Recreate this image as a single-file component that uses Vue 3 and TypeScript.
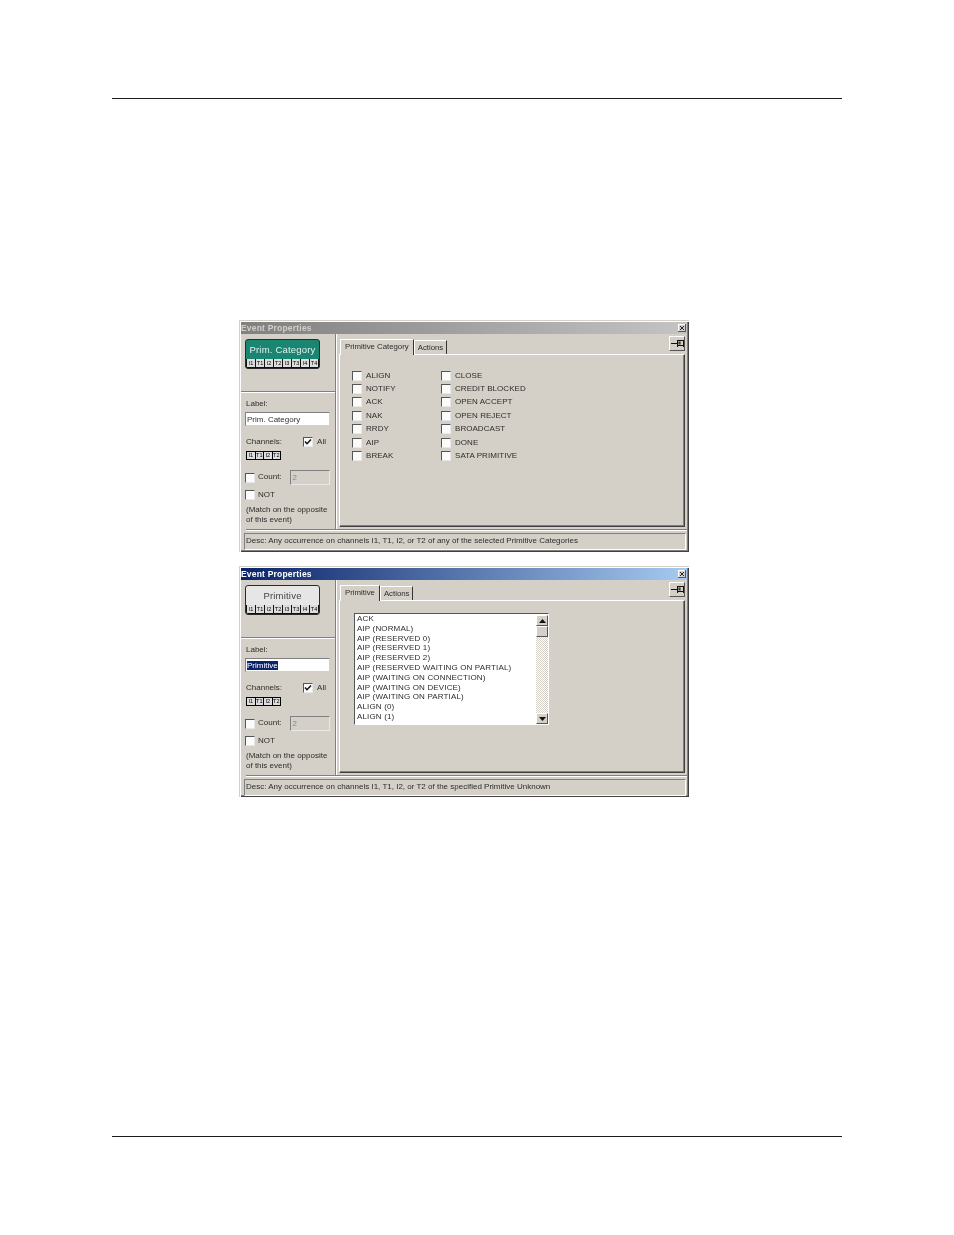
<script setup lang="ts">
interface Win {
  active: boolean
  chip: string
  tabs: string[]
  desc: string
  list: boolean
}
const wins: Win[] = [
  { active: false, chip: 'Prim. Category', tabs: ['Primitive Category', 'Actions'], list: false,
    desc: 'Desc: Any occurrence on channels I1, T1, I2, or T2 of any of the selected Primitive Categories' },
  { active: true, chip: 'Primitive', tabs: ['Primitive', 'Actions'], list: true,
    desc: 'Desc: Any occurrence on channels I1, T1, I2, or T2 of the specified Primitive Unknown' },
]
const allCh = ['I1', 'T1', 'I2', 'T2', 'I3', 'T3', 'I4', 'T4']
const ch = ['I1', 'T1', 'I2', 'T2']
const cats = ['ALIGN', 'CLOSE', 'NOTIFY', 'CREDIT BLOCKED', 'ACK', 'OPEN ACCEPT', 'NAK', 'OPEN REJECT', 'RRDY', 'BROADCAST', 'AIP', 'DONE', 'BREAK', 'SATA PRIMITIVE']
const items = ['ACK', 'AIP (NORMAL)', 'AIP (RESERVED 0)', 'AIP (RESERVED 1)', 'AIP (RESERVED 2)', 'AIP (RESERVED WAITING ON PARTIAL)', 'AIP (WAITING ON CONNECTION)', 'AIP (WAITING ON DEVICE)', 'AIP (WAITING ON PARTIAL)', 'ALIGN (0)', 'ALIGN (1)']
</script>

<template>
  <div class="page">
    <div class="rule"></div>
    <div class="windows">
      <section v-for="w in wins" :key="w.chip" class="win">
        <header class="title" :class="{ on: w.active }">
          <span>Event Properties</span>
          <span class="close"><svg width="6" height="6" viewBox="0 0 6 6"><path d="M1 1l4 4M5 1L1 5" stroke="#222" stroke-width="1" fill="none"/></svg></span>
        </header>
        <div class="body">
          <aside class="side">
            <div class="top">
              <div class="chip" :class="{ teal: !w.active }">
                <div class="chip-label">{{ w.chip }}</div>
                <div class="chip-boxes"><span v-for="c in allCh" :key="c">{{ c }}</span></div>
              </div>
            </div>
            <div class="fields">
              <div class="txt lab">Label:</div>
              <div class="input"><span :class="{ sel: w.active }">{{ w.chip }}</span></div>
              <div class="chan">
                <span class="txt">Channels:</span>
                <span class="chan-all">
                  <span class="cb"><svg width="8" height="8" viewBox="0 0 8 8"><path d="M1 3.500l2 2.200L7 1.400" stroke="#111" stroke-width="1.500" fill="none"/></svg></span>
                  <span class="txt">All</span>
                </span>
              </div>
              <div class="mini"><span v-for="c in ch" :key="c">{{ c }}</span></div>
              <div class="count">
                <span class="cb"></span><span class="txt cnt up">Count:</span>
                <span class="num">2</span>
              </div>
              <div class="not"><span class="cb"></span><span class="txt cnt">NOT</span></div>
              <div class="txt note">(Match on the opposite<br>of this event)</div>
            </div>
          </aside>
          <main class="main">
            <div class="tabrow">
              <div class="tabs">
                <span v-for="(t, i) in w.tabs" :key="t" class="tab" :class="{ cur: i === 0 }">{{ t }}</span>
              </div>
              <span class="pin"><svg width="13" height="9" viewBox="0 0 13 9"><path d="M0 4.500h6M6.500 1v7M12.500 1v7M6.500 1.500h6M6.500 6.500h6M8 2.500v3M9 2.500v3" stroke="#111" stroke-width="1" fill="none"/></svg></span>
            </div>
            <div class="panel" :class="{ lp: w.list }">
              <div v-if="!w.list" class="cats">
                <div v-for="c in cats" :key="c" class="cat"><span class="cb"></span><span class="txt">{{ c }}</span></div>
              </div>
              <div v-else class="list">
                <div class="rows"><div v-for="it in items" :key="it" class="txt row">{{ it }}</div></div>
                <div class="scroll">
                  <span class="sbtn"><svg width="7" height="4" viewBox="0 0 7 4"><path d="M3.500 0L7 4H0z" fill="#111"/></svg></span>
                  <span class="thumb"></span>
                  <span class="track"></span>
                  <span class="sbtn"><svg width="7" height="4" viewBox="0 0 7 4"><path d="M0 0h7L3.500 4z" fill="#111"/></svg></span>
                </div>
              </div>
            </div>
          </main>
        </div>
        <div class="sep"></div>
        <div class="status txt">{{ w.desc }}</div>
      </section>
    </div>
    <div class="rule bottom"></div>
  </div>
</template>

<style>
html, body { margin: 0; background: #fff; }
</style>

<style scoped>
.page { height: 1235px; padding: 98px 112px 0; box-sizing: border-box; background: #fff; font-family: "Liberation Sans", Arial, sans-serif; overflow: hidden; }
.rule { height: 1px; background: #1a1a1a; }
.bottom { margin-top: 339px; }
.windows { margin: 221px 0 0 127px; display: flex; flex-direction: column; gap: 14px; }
.win { width: 450px; height: 232px; box-sizing: border-box; background: #d4d0c8; padding: 2px; box-shadow: inset 1px 1px 0 #d4d0c8, inset 2px 2px 0 #fff, inset -1px -1px 0 #404040, inset -2px -2px 0 #808080; filter: blur(0.25px); }
.win + .win { height: 231px; }
.txt { font-size: 8px; line-height: 10px; color: #2c2c2c; white-space: nowrap; }
.title { height: 12px; display: flex; align-items: center; justify-content: space-between; padding: 0 1px 0 0; background: linear-gradient(90deg, #808080, #c4c4c4); color: #d4d0c8; font-size: 8.5px; font-weight: 700; letter-spacing: 0.2px; }
.title.on { background: linear-gradient(90deg, #0a246a, #a6caf0); color: #fff; }
.close { width: 8px; height: 8px; background: #d4d0c8; box-shadow: inset -1px -1px 0 #555, inset 1px 1px 0 #fff; display: flex; align-items: center; justify-content: center; }
.body { height: 195px; display: flex; }
.side { width: 94px; flex: none; border-right: 1px solid #808080; box-shadow: 1px 0 0 #fff; }
.top { height: 58px; padding: 5px 0 0 4px; box-sizing: border-box; border-bottom: 1px solid #808080; box-shadow: 0 1px 0 #fff; }
.chip { width: 75px; height: 30px; box-sizing: border-box; border: 1px solid #2b2b2b; border-radius: 3px; background: #e6e6e6; overflow: hidden; display: flex; flex-direction: column; }
.chip.teal { background: #1a8570; }
.chip-label { flex: 1; text-align: center; font-size: 9.500px; line-height: 19px; color: #444; letter-spacing: 0.2px; }
.chip.teal .chip-label { color: #e4f1ee; }
.chip-boxes { display: flex; height: 9px; gap: 1px; background: #111; padding: 0 1px; }
.chip-boxes span, .mini span { flex: 1; background: #ddd; color: #000; font-size: 5.500px; line-height: 8px; text-align: center; overflow: hidden; }
.chip-boxes span { margin: 0 0 1px; }
.fields { padding: 7px 0 0 4px; height: 128px; box-sizing: border-box; }
.lab { margin-left: 1px; }
.input { width: 85px; height: 14px; margin-top: 3px; box-sizing: border-box; background: #fff; border: 1px solid; border-color: #808080 #d4d0c8 #d4d0c8 #808080; padding-left: 1px; font-size: 8px; line-height: 14px; color: #333; white-space: nowrap; overflow: hidden; }
.sel { background: #0a246a; color: #fff; }
.chan { display: flex; justify-content: space-between; align-items: center; height: 11px; margin-top: 10px; width: 81px; padding-left: 1px; box-sizing: border-box; }
.chan-all { display: flex; align-items: center; gap: 4px; }
.cb { width: 10px; height: 10px; box-sizing: border-box; flex: none; display: flex; align-items: center; justify-content: center; background: #fbfbfb; border: 1px solid; border-color: #555 #e8e8e8 #e8e8e8 #555; }
.mini { display: flex; width: 35px; height: 9px; margin: 4px 0 0 1px; gap: 1px; background: #000; padding: 0 1px; box-sizing: border-box; }
.mini span { margin: 1px 0; line-height: 7px; }
.count { display: flex; align-items: center; height: 15px; margin-top: 10px; }
.cnt { margin-left: 3px; }
.up { margin-bottom: 2px; }
.num { margin-left: 8px; width: 40px; height: 15px; box-sizing: border-box; border: 1px solid; border-color: #808080 #e8e8e8 #e8e8e8 #808080; color: #888; font-size: 8px; line-height: 13px; padding-left: 2px; }
.not { display: flex; align-items: center; height: 10px; margin-top: 5px; }
.note { margin: 5px 0 0 1px; }
.main { flex: 1; padding: 0 2px 2px 3px; display: flex; flex-direction: column; min-width: 0; }
.tabrow { height: 20px; flex: none; display: flex; justify-content: space-between; align-items: flex-end; }
.tabs { display: flex; align-items: flex-end; padding-left: 1px; }
.tab { height: 13px; padding: 0 3px; font-size: 7.800px; line-height: 13px; color: #2c2c2c; border-top: 1px solid #fff; border-left: 1px solid #fff; border-right: 1px solid #333; white-space: nowrap; }
.tab.cur { height: 15px; line-height: 13px; padding: 0 4px; background: #d4d0c8; position: relative; top: 1px; }
.pin { width: 16px; height: 15px; margin-bottom: 3px; box-sizing: border-box; display: flex; align-items: center; justify-content: center; border: 1px solid; border-color: #fff #555 #555 #fff; }
.panel { flex: 1; box-sizing: border-box; border: 1px solid; border-color: #fff #404040 #404040 #fff; box-shadow: inset -1px -1px 0 #808080; padding: 14px 0 0 12px; }
.panel.lp { padding: 12px 0 0 14px; }
.cats { display: grid; grid-template-columns: 89px 89px; grid-auto-rows: 13.400px; }
.cat { display: flex; align-items: center; gap: 4px; }
.cat .txt { letter-spacing: 0.05px; }
.row { letter-spacing: 0.15px; line-height: 9.800px; }
.list { width: 195px; height: 112px; box-sizing: border-box; display: flex; background: #fff; border: 1px solid; border-color: #555 #fff #fff #555; }
.rows { flex: 1; padding: 0 0 0 2px; min-width: 0; }
.scroll { width: 12px; flex: none; display: flex; flex-direction: column; padding-top: 1px; box-sizing: border-box; }
.sbtn, .thumb { height: 11px; flex: none; background: #d4d0c8; box-sizing: border-box; border: 1px solid; border-color: #fff #555 #555 #fff; display: flex; align-items: center; justify-content: center; }
.track { flex: 1; background: repeating-conic-gradient(#d4d0c8 0 25%, #fff 0 50%) 0 0 / 2px 2px; }
.sep { height: 1px; margin-left: 5px; background: #808080; box-shadow: 0 1px 0 #fff; }
.status { height: 17px; margin: 3px 0 0 3px; width: 442px; box-sizing: border-box; border: 1px solid; border-color: #808080 #fff #fff #808080; padding-left: 1px; line-height: 13px; }
</style>
